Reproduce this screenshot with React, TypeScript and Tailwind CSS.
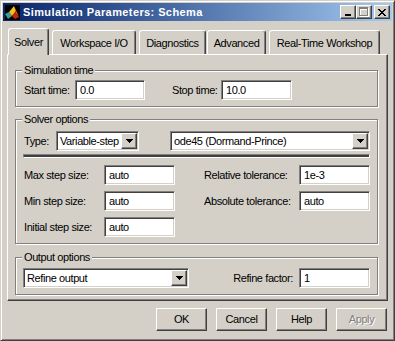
import React from "react";

// classic win2k bevels
const raised =
  "border border-t-white border-l-white border-r-[#404040] border-b-[#404040] shadow-[inset_-1px_-1px_0_#808080]";
const sunken =
  "border border-t-[#808080] border-l-[#808080] border-r-white border-b-white shadow-[inset_1px_1px_0_#404040,inset_-1px_-1px_0_#d4d0c8]";

const Edit = ({ value, w }: { value: string; w: string }) => (
  <div className={`${w} h-[20px] bg-white ${sunken} flex items-center pl-[4px]`}>
    {value}
  </div>
);

const DownArrow = () => (
  <svg width="7" height="4" viewBox="0 0 7 4" shapeRendering="crispEdges">
    <path d="M0 0h7v1h-1v1h-1v1h-1v1h-1v-1h-1v-1h-1v-1h-1z" fill="#000" />
  </svg>
);

const Combo = ({ value, w }: { value: string; w: string }) => (
  <div className={`${w} h-[20px] bg-white ${sunken} flex items-center p-[1px]`}>
    <span className="flex-1 pl-[2px] whitespace-nowrap overflow-hidden">{value}</span>
    <div className={`w-[16px] h-[16px] bg-[#d4d0c8] ${raised} flex items-center justify-center`}>
      <DownArrow />
    </div>
  </div>
);

const Group = ({
  title,
  className,
  children,
}: {
  title: string;
  className: string;
  children: React.ReactNode;
}) => (
  <div
    className={`ml-[7px] w-[363px] border border-[#808080] shadow-[inset_1px_1px_0_#fff,1px_1px_0_#fff] ${className}`}
  >
    <div className="-mt-[7px] ml-[6px] w-fit px-[2px] h-[13px] bg-[#d4d0c8] whitespace-nowrap">{title}</div>
    {children}
  </div>
);

const Tab = ({ label, active, className }: { label: string; active?: boolean; className: string }) =>
  active ? (
    <div
      className={`${className} h-[27px] -mb-[1px] bg-[#d4d0c8] border-t border-l border-r border-t-white border-l-white border-r-[#404040] shadow-[inset_-1px_0_0_#808080] rounded-t-[3px] pt-[7px] text-center whitespace-nowrap`}
    >
      {label}
    </div>
  ) : (
    <div
      className={`${className} h-[24px] bg-[#d4d0c8] border-t border-l border-r border-t-white border-l-white border-r-[#404040] shadow-[inset_-1px_0_0_#808080] rounded-t-[3px] pt-[6px] text-center whitespace-nowrap`}
    >
      {label}
    </div>
  );

const MatlabIcon = () => (
  <svg width="16" height="16" viewBox="0 0 16 16">
    <rect x="1" y="1" width="15" height="15" fill="#000" />
    <polygon points="1,10 5,8 8,12 4,15" fill="#3b9c9c" />
    <polygon points="5,8 10,2 12,7 8,12" fill="#f2c21c" />
    <polygon points="10,2 15,13 12,10 12,7" fill="#e8501a" />
    <polygon points="8,12 12,7 12,10 15,13 11,15" fill="#c42410" />
  </svg>
);

const CaptionButton = ({ children, ml }: { children: React.ReactNode; ml: string }) => (
  <div className={`${ml} w-[16px] h-[14px] bg-[#d4d0c8] ${raised} flex items-center justify-center`}>
    {children}
  </div>
);

const DialogButton = ({ label, disabled }: { label: string; disabled?: boolean }) => (
  <div
    className={`w-[51px] h-[23px] bg-[#d4d0c8] ${raised} flex items-center justify-center ${
      disabled ? "text-[#808080] [text-shadow:1px_1px_0_#fff]" : "text-black"
    }`}
  >
    {label}
  </div>
);

export default function App() {
  return (
    <div className="w-[395px] h-[341px] bg-[#d4d0c8] border border-t-[#d4d0c8] border-l-[#d4d0c8] border-r-[#404040] border-b-[#404040] shadow-[inset_1px_1px_0_#fff,inset_-1px_-1px_0_#808080] p-[2px] flex flex-col text-[11px] leading-[13px] tracking-[-0.4px] text-black font-['Liberation_Sans',Arial,sans-serif]">
      {/* title bar */}
      <div className="h-[18px] flex items-center pl-[1px] pr-[2px] bg-linear-to-r from-[#0a246a] to-[#a6caf0]">
        <MatlabIcon />
        <span className="ml-[3px] text-white font-bold tracking-[0.4px]">Simulation Parameters: Schema</span>
        <div className="ml-auto flex">
          <CaptionButton ml="ml-0">
            <svg width="6" height="7" viewBox="0 0 6 7" shapeRendering="crispEdges" className="mt-[1px] -ml-[1px]">
              <rect x="0" y="5" width="6" height="2" fill="#000" />
            </svg>
          </CaptionButton>
          <CaptionButton ml="ml-0">
            <svg width="10" height="10" viewBox="0 0 10 10" shapeRendering="crispEdges">
              <path d="M1 1h9v9h-9zM2 3v6h7v-6z" fill="#fff" fillRule="evenodd" />
              <path d="M0 0h9v9h-9zM1 2v6h7v-6z" fill="#808080" fillRule="evenodd" />
            </svg>
          </CaptionButton>
          <CaptionButton ml="ml-[2px]">
            <svg width="8" height="7" viewBox="0 0 8 7" shapeRendering="crispEdges">
              <path
                d="M0 0h2v1h1v1h2v-1h1v-1h2v1h-1v1h-1v1h-1v1h1v1h1v1h1v1h-2v-1h-1v-1h-2v1h-1v1h-2v-1h1v-1h1v-1h1v-1h-1v-1h-1v-1h-1z"
                fill="#000"
              />
            </svg>
          </CaptionButton>
        </div>
      </div>

      {/* tabs */}
      <div className="mt-[7px] h-[26px] flex items-end relative z-10">
        <Tab label="Solver" active className="ml-[5px] w-[41px]" />
        <Tab label="Workspace I/O" className="ml-[3px] w-[84px]" />
        <Tab label="Diagnostics" className="ml-[3px] w-[67px]" />
        <Tab label="Advanced" className="ml-[1px] w-[59px]" />
        <Tab label="Real-Time Workshop" className="ml-[3px] w-[111px]" />
      </div>

      {/* tab page */}
      <div className="ml-[4px] w-[381px] h-[247px] border border-t-white border-l-white border-r-[#404040] border-b-[#404040] shadow-[inset_-1px_-1px_0_#808080] pt-[15px] flex flex-col">
        <Group title="Simulation time" className="pb-[6px]">
          <div className="mt-[3px] h-[20px] flex items-center pl-[8px] whitespace-nowrap">
            <span className="w-[51px]">Start time:</span>
            <Edit value="0.0" w="w-[70px]" />
            <span className="ml-[27px] w-[49px]">Stop time:</span>
            <Edit value="10.0" w="w-[71px]" />
          </div>
        </Group>

        <Group title="Solver options" className="mt-[12px] pb-[6px]">
          <div className="mt-[5px] h-[20px] flex items-center pl-[8px] whitespace-nowrap">
            <span className="w-[32px]">Type:</span>
            <Combo value="Variable-step" w="w-[83px]" />
            <div className="ml-[31px]">
              <Combo value="ode45 (Dormand-Prince)" w="w-[200px]" />
            </div>
          </div>
          <div className="mt-[3px] ml-[7px] w-[347px] h-[4px] border border-t-[#808080] border-l-[#808080] border-r-white border-b-white shadow-[inset_0_2px_0_#404040]" />
          <div className="mt-[7px] flex flex-col gap-[6px] pl-[8px] whitespace-nowrap">
            <div className="h-[20px] flex items-center">
              <span className="w-[80px]">Max step size:</span>
              <Edit value="auto" w="w-[71px]" />
              <span className="ml-[29px] w-[95px]">Relative tolerance:</span>
              <Edit value="1e-3" w="w-[71px]" />
            </div>
            <div className="h-[20px] flex items-center">
              <span className="w-[80px]">Min step size:</span>
              <Edit value="auto" w="w-[71px]" />
              <span className="ml-[29px] w-[95px]">Absolute tolerance:</span>
              <Edit value="auto" w="w-[71px]" />
            </div>
            <div className="h-[20px] flex items-center">
              <span className="w-[80px]">Initial step size:</span>
              <Edit value="auto" w="w-[71px]" />
            </div>
          </div>
        </Group>

        <Group title="Output options" className="mt-[13px] pb-[6px]">
          <div className="mt-[4px] h-[20px] flex items-center pl-[7px] whitespace-nowrap">
            <Combo value="Refine output" w="w-[166px]" />
            <span className="w-[110px] text-right pr-[6px]">Refine factor:</span>
            <Edit value="1" w="w-[71px]" />
          </div>
        </Group>
      </div>

      {/* dialog buttons */}
      <div className="mt-[7px] flex justify-end gap-[9px] pr-[5px]">
        <DialogButton label="OK" />
        <DialogButton label="Cancel" />
        <DialogButton label="Help" />
        <DialogButton label="Apply" disabled />
      </div>
    </div>
  );
}
